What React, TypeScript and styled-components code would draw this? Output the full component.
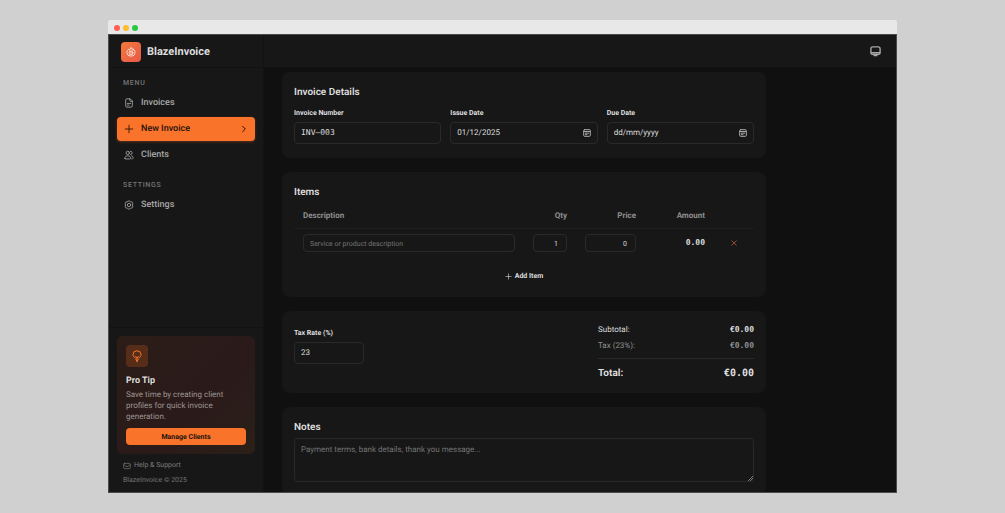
import React from "react";
import styled, { createGlobalStyle, css } from "styled-components";

const sans = `Roboto, "Liberation Sans", sans-serif`;
const mono = `"DejaVu Sans Mono", "Liberation Mono", monospace`;

const color = {
  desk: "#d0d0d0",
  chrome: "#e8e8e8",
  edge: "#4a4a4a",
  page: "#101010",
  panel: "#171717",
  line: "#1e1e1e",
  seam: "#121212",
  field: "#2a2a2a",
  text: "#dedede",
  soft: "#a8a8a8",
  muted: "#757575",
  accent: "#f9742a",
  ink: "#24120a",
};

const GlobalStyle = createGlobalStyle`
  *, *::before, *::after { box-sizing: border-box; }
  body {
    margin: 0;
    background: ${color.desk};
    font-family: ${sans};
    color: ${color.text};
    text-rendering: geometricPrecision;
  }
  button, input, textarea {
    font: inherit;
    text-rendering: inherit;
    color: inherit;
    margin: 0;
  }
  h1, h2, h3, p, ul { margin: 0; padding: 0; }
  ul { list-style: none; }
  a { color: inherit; text-decoration: none; }
`;

const Desk = styled.div`
  height: 100vh;
  padding: 20px 108px;
`;

const Window = styled.div`
  display: flex;
  flex-direction: column;
  height: 100%;
  border-radius: 2px 2px 0 0;
  overflow: hidden;
`;

const TitleBar = styled.div`
  flex: none;
  display: flex;
  align-items: center;
  gap: 3px;
  height: 14px;
  padding: 1px 6px 0;
  background: ${color.chrome};
`;

const Light = styled.span<{ $tone: string }>`
  width: 6px;
  height: 6px;
  border-radius: 50%;
  background: ${(p) => p.$tone};
`;

const Shell = styled.div`
  flex: 1;
  min-height: 0;
  display: grid;
  grid-template-columns: 155px minmax(0, 1fr);
  border: 1px solid ${color.edge};
  background: ${color.page};
`;

const Sidebar = styled.aside`
  display: flex;
  flex-direction: column;
  min-height: 0;
  background: ${color.panel};
  border-right: 1px solid ${color.seam};
`;

const Brand = styled.div`
  display: flex;
  align-items: center;
  gap: 6px;
  height: 33px;
  padding: 1px 12px 0;
  border-bottom: 1px solid ${color.seam};
`;

const BrandMark = styled.span`
  display: grid;
  place-items: center;
  width: 20px;
  height: 20px;
  border-radius: 4px;
  color: #fff0e8;
  background: linear-gradient(135deg, #f27a3a, #e9584b);
`;

const BrandName = styled.h1`
  padding-top: 1px;
  font-size: 11px;
  line-height: 16px;
  font-weight: 700;
`;

const Nav = styled.nav`
  flex: 1;
  display: flex;
  flex-direction: column;
  gap: 13px;
  padding: 10px 8px;
`;

const NavTitle = styled.h2`
  padding: 0 6px;
  margin-bottom: 3px;
  font-size: 7px;
  line-height: 10px;
  font-weight: 500;
  letter-spacing: 0.1em;
  color: ${color.muted};
`;

const NavList = styled.ul`
  display: grid;
  gap: 2px;
`;

const NavLink = styled.a<{ $active?: boolean }>`
  display: flex;
  align-items: center;
  gap: 7px;
  height: 24px;
  padding: 0 7px;
  border-radius: 4px;
  font-size: 9px;
  line-height: 14px;
  font-weight: 500;
  color: ${color.soft};
  svg:last-child:not(:first-child) { margin-left: auto; }
  ${(p) =>
    p.$active &&
    css`
      color: ${color.ink};
      background: ${color.accent};
      box-shadow: 0 1px 3px rgba(249, 116, 42, 0.3);
    `}
`;

const SideFoot = styled.div`
  padding: 8px 8px 7px;
  border-top: 1px solid ${color.seam};
`;

const Tip = styled.section`
  padding: 9px;
  border-radius: 6px;
  background: linear-gradient(135deg, #2c1d17, #2a1a1a 55%, #2b2018);
`;

const TipIcon = styled.span`
  display: grid;
  place-items: center;
  width: 22px;
  height: 22px;
  border-radius: 4px;
  color: ${color.accent};
  background: #552d19;
`;

const TipTitle = styled.h3`
  margin-top: 8px;
  font-size: 9px;
  line-height: 13px;
  font-weight: 700;
`;

const TipText = styled.p`
  margin: 1px 0 6px;
  font-size: 8px;
  line-height: 11px;
  color: #9d9593;
`;

const TipButton = styled.button`
  display: block;
  width: 100%;
  height: 17px;
  padding: 0;
  border: 0;
  border-radius: 4px;
  font-size: 7px;
  font-weight: 700;
  color: ${color.ink};
  background: ${color.accent};
`;

const FootLink = styled.a`
  display: flex;
  align-items: center;
  gap: 3px;
  padding: 6px 6px 4px;
  font-size: 7px;
  line-height: 11px;
  color: #7d7d7d;
`;

const Copyright = styled.p`
  padding: 0 6px;
  font-size: 7px;
  line-height: 10px;
  color: ${color.muted};
`;

const Content = styled.div`
  display: flex;
  flex-direction: column;
  min-height: 0;
`;

const TopBar = styled.header`
  flex: none;
  display: flex;
  align-items: center;
  justify-content: flex-end;
  height: 33px;
  padding: 1px 15px 0;
  background: ${color.panel};
  border-bottom: 1px solid ${color.seam};
`;

const IconButton = styled.button`
  display: inline-grid;
  place-items: center;
  padding: 0;
  border: 0;
  background: none;
  color: ${color.soft};
`;

const DeleteButton = styled(IconButton)`
  display: grid;
  margin: 0 auto;
  color: #c0584a;
`;

const Form = styled.form`
  flex: 1;
  min-height: 0;
  display: flex;
  flex-direction: column;
  gap: 14px;
  padding: 4px 18px 14px;
  overflow-y: auto;
  scrollbar-width: none;
`;

const Card = styled.section`
  flex: none;
  width: 100%;
  max-width: 484px;
  padding: 12px;
  border-radius: 8px;
  background: ${color.panel};
`;

const CardTitle = styled.h2`
  font-size: 10px;
  line-height: 18px;
  font-weight: 600;
`;

const FieldRow = styled.div`
  display: grid;
  grid-template-columns: repeat(3, minmax(0, 1fr));
  gap: 9px;
  margin: 6px 0 2px;
`;

const Field = styled.div`
  display: flex;
  flex-direction: column;
  gap: 4px;
`;

const Label = styled.label`
  font-size: 7px;
  line-height: 10px;
  font-weight: 700;
`;

const FieldBox = styled.div`
  display: flex;
  align-items: center;
  height: 22px;
  padding: 0 6px;
  border: 1px solid ${color.field};
  border-radius: 4px;
`;

const BareInput = styled.input<{ $mono?: boolean }>`
  flex: 1;
  min-width: 0;
  padding: 0;
  border: 0;
  outline: 0;
  background: none;
  font-family: ${(p) => (p.$mono ? mono : sans)};
  font-size: 8px;
  line-height: 12px;
`;

const CellInput = styled.input<{ $end?: boolean }>`
  display: block;
  width: 100%;
  height: 18px;
  padding: 1px ${(p) => (p.$end ? 8 : 6)}px 0;
  border: 1px solid ${color.field};
  border-radius: 4px;
  outline: 0;
  background: none;
  font-size: 7px;
  text-align: ${(p) => (p.$end ? "right" : "left")};
  &::placeholder { color: ${color.muted}; opacity: 1; }
`;

const ItemTable = styled.table`
  width: 100%;
  margin-top: 1px;
  table-layout: fixed;
  border-collapse: collapse;
`;

const HeadCell = styled.th<{ $width?: number; $end?: boolean }>`
  ${(p) => p.$width && `width: ${p.$width}px;`}
  height: 25px;
  padding: 0 9px;
  border-bottom: 1px solid ${color.line};
  font-size: 8px;
  font-weight: 700;
  color: #8f8f8f;
  text-align: ${(p) => (p.$end ? "right" : "left")};
`;

const Cell = styled.td`
  height: 30px;
  padding: 0 9px;
`;

const Money = styled.span<{ $tone?: string; $large?: boolean }>`
  display: block;
  text-align: right;
  font-family: ${mono};
  font-size: ${(p) => (p.$large ? 10 : 8)}px;
  line-height: 14px;
  font-weight: 700;
  color: ${(p) => p.$tone ?? color.text};
`;

const AddButton = styled.button`
  display: flex;
  align-items: center;
  gap: 3px;
  height: 18px;
  margin: 9px auto 0;
  padding: 0 6px;
  border: 0;
  background: none;
  font-size: 7px;
  font-weight: 700;
`;

const SummaryRow = styled.div`
  display: flex;
  justify-content: space-between;
  min-height: 58px;
`;

const TaxField = styled(Field)`
  width: 70px;
  padding-top: 5px;
`;

const Totals = styled.div`
  width: 156px;
  padding-top: 1px;
`;

const TotalLine = styled.div<{ $soft?: boolean }>`
  display: flex;
  align-items: center;
  justify-content: space-between;
  height: 12px;
  margin-bottom: 4px;
  font-size: 8px;
  line-height: 12px;
  color: ${(p) => (p.$soft ? "#8f8f8f" : color.text)};
`;

const GrandTotal = styled(TotalLine)`
  height: 22px;
  margin: 6px 0 0;
  padding-top: 8px;
  border-top: 1px solid ${color.field};
  font-size: 10px;
  font-weight: 700;
`;

const NotesBox = styled.textarea`
  display: block;
  width: 100%;
  height: 44px;
  margin-top: 1px;
  padding: 5px 6px 4px;
  border: 1px solid ${color.field};
  border-radius: 4px;
  outline: 0;
  background: none;
  font-size: 8px;
  line-height: 12px;
  resize: vertical;
  &::placeholder { color: ${color.muted}; opacity: 1; }
  &::-webkit-resizer {
    background: linear-gradient(135deg, transparent 80%, #777 80%, #777 84%, transparent 84%, transparent 89%, #777 89%, #777 93%, transparent 93%);
  }
`;

const glyphs = {
  flame: (
    <>
      <path d="M12 2c1 3 3 4 5 6.500C19 5.500 16.500 4 16 4c3.500 2 6 5.500 6 9.500A9.500 9.500 0 0 1 12 22a9.500 9.500 0 0 1-10-8.500C2 9.500 4.500 6.500 7 5c0 1.500.5 2.500 1.500 3C9 5.500 10 3.500 12 2Z" />
      <circle cx="12" cy="14" r="4.500" />
      <path d="M12 11.500v3" />
    </>
  ),
  file: (
    <>
      <path d="M14 2H7a3 3 0 0 0-3 3v14a3 3 0 0 0 3 3h10a3 3 0 0 0 3-3V8Z" />
      <path d="M14 2v4a2 2 0 0 0 2 2h4M8 13h8M8 17h4" />
    </>
  ),
  plus: <path d="M12 3v18M3 12h18" />,
  chevron: <path d="m8 4 8 8-8 8" />,
  users: (
    <>
      <circle cx="9" cy="7" r="4" />
      <path d="M2 20c0-4 3-6 7-6s7 2 7 6c0 1-1 1.500-2 1.500H4c-1 0-2-.5-2-1.500ZM15 3a4 4 0 0 1 1 8M18 14c2.500.5 4 2.500 4 5 0 1.500-1 2.500-3 2.500" />
    </>
  ),
  gear: (
    <>
      <path d="M10 2.700a4 4 0 0 1 4 0l1.500 1.300 4 1a3 3 0 0 1 1.500 3l-.5 4 .5 4a3 3 0 0 1-1.500 3l-4 1-1.500 1.300a4 4 0 0 1-4 0L8.500 20l-4-1A3 3 0 0 1 3 16l.5-4L3 8a3 3 0 0 1 1.500-3l4-1Z" />
      <circle cx="12" cy="12" r="4" />
    </>
  ),
  bulb: (
    <>
      <path d="M8 16C5.500 14.500 4 12 4 9.500a8 8 0 0 1 16 0c0 2.500-1.500 5-4 6.500" />
      <path d="M12 23V14M8.500 13l3.500 3 3.500-3M9.500 18.500 12 23l2.500-4.500" />
    </>
  ),
  mail: (
    <>
      <rect x="2" y="4" width="20" height="16" rx="3" />
      <path d="m3 8 6 5c2 1.300 4 1.300 6 0l6-5" />
    </>
  ),
  monitor: (
    <>
      <rect x="2" y="2" width="20" height="16" rx="4" />
      <path d="M3 14.500h18M9 18v3h6v-3" />
    </>
  ),
  calendar: (
    <>
      <rect x="2" y="2" width="20" height="20" rx="3" />
      <path d="M3 7.500h18M7 12.500h10M7 17h5" />
    </>
  ),
  close: <path d="M3 3l18 18M21 3 3 21" />,
};

function Icon({ name, size = 10, weight = 2 }: { name: keyof typeof glyphs; size?: number; weight?: number }) {
  return (
    <svg
      width={size}
      height={size}
      viewBox="0 0 24 24"
      fill="none"
      stroke="currentColor"
      strokeWidth={weight}
      strokeLinecap="round"
      strokeLinejoin="round"
      aria-hidden="true"
    >
      {glyphs[name]}
    </svg>
  );
}

function TextField({ id, label, value, isMono, isDate }: { id: string; label: string; value: string; isMono?: boolean; isDate?: boolean }) {
  return (
    <Field>
      <Label htmlFor={id}>{label}</Label>
      <FieldBox>
        <BareInput id={id} defaultValue={value} $mono={isMono} />
        {isDate && (
          <IconButton type="button" aria-label={`Pick ${label}`}>
            <Icon name="calendar" size={8} weight={3} />
          </IconButton>
        )}
      </FieldBox>
    </Field>
  );
}

export default function App() {
  return (
    <Desk>
      <GlobalStyle />
      <Window>
        <TitleBar>
          <Light $tone="#ff5f57" />
          <Light $tone="#febc2e" />
          <Light $tone="#28c840" />
        </TitleBar>
        <Shell>
          <Sidebar>
            <Brand>
              <BrandMark><Icon name="flame" size={10} /></BrandMark>
              <BrandName>BlazeInvoice</BrandName>
            </Brand>
            <Nav>
              <div>
                <NavTitle>MENU</NavTitle>
                <NavList>
                  <li><NavLink href="#invoices"><Icon name="file" />Invoices</NavLink></li>
                  <li>
                    <NavLink href="#new" $active>
                      <Icon name="plus" />New Invoice<Icon name="chevron" size={8} weight={3} />
                    </NavLink>
                  </li>
                  <li><NavLink href="#clients"><Icon name="users" />Clients</NavLink></li>
                </NavList>
              </div>
              <div>
                <NavTitle>SETTINGS</NavTitle>
                <NavList>
                  <li><NavLink href="#settings"><Icon name="gear" />Settings</NavLink></li>
                </NavList>
              </div>
            </Nav>
            <SideFoot>
              <Tip>
                <TipIcon><Icon name="bulb" size={12} /></TipIcon>
                <TipTitle>Pro Tip</TipTitle>
                <TipText>Save time by creating client profiles for quick invoice generation.</TipText>
                <TipButton type="button">Manage Clients</TipButton>
              </Tip>
              <FootLink href="#help"><Icon name="mail" size={8} />Help &amp; Support</FootLink>
              <Copyright>BlazeInvoice © 2025</Copyright>
            </SideFoot>
          </Sidebar>
          <Content>
            <TopBar>
              <IconButton type="button" aria-label="Theme"><Icon name="monitor" size={11} weight={3} /></IconButton>
            </TopBar>
            <Form>
              <Card>
                <CardTitle>Invoice Details</CardTitle>
                <FieldRow>
                  <TextField id="number" label="Invoice Number" value="INV–003" isMono />
                  <TextField id="issue" label="Issue Date" value="01/12/2025" isDate />
                  <TextField id="due" label="Due Date" value="dd/mm/yyyy" isDate />
                </FieldRow>
              </Card>
              <Card>
                <CardTitle>Items</CardTitle>
                <ItemTable>
                  <thead>
                    <tr>
                      <HeadCell>Description</HeadCell>
                      <HeadCell $width={52} $end>Qty</HeadCell>
                      <HeadCell $width={69} $end>Price</HeadCell>
                      <HeadCell $width={69} $end>Amount</HeadCell>
                      <HeadCell $width={40} />
                    </tr>
                  </thead>
                  <tbody>
                    <tr>
                      <Cell><CellInput aria-label="Description" placeholder="Service or product description" /></Cell>
                      <Cell><CellInput aria-label="Quantity" defaultValue="1" $end /></Cell>
                      <Cell><CellInput aria-label="Price" defaultValue="0" $end /></Cell>
                      <Cell><Money>0.00</Money></Cell>
                      <Cell>
                        <DeleteButton type="button" aria-label="Remove item"><Icon name="close" size={6} weight={3} /></DeleteButton>
                      </Cell>
                    </tr>
                  </tbody>
                </ItemTable>
                <AddButton type="button"><Icon name="plus" size={7} />Add Item</AddButton>
              </Card>
              <Card>
                <SummaryRow>
                  <TaxField>
                    <Label htmlFor="tax">Tax Rate (%)</Label>
                    <FieldBox><BareInput id="tax" defaultValue="23" /></FieldBox>
                  </TaxField>
                  <Totals>
                    <TotalLine>Subtotal:<Money>€0.00</Money></TotalLine>
                    <TotalLine $soft>Tax (23%):<Money $tone="#8f8f8f">€0.00</Money></TotalLine>
                    <GrandTotal>Total:<Money $large>€0.00</Money></GrandTotal>
                  </Totals>
                </SummaryRow>
              </Card>
              <Card>
                <CardTitle><label htmlFor="notes">Notes</label></CardTitle>
                <NotesBox id="notes" placeholder="Payment terms, bank details, thank you message..." />
              </Card>
            </Form>
          </Content>
        </Shell>
      </Window>
    </Desk>
  );
}
